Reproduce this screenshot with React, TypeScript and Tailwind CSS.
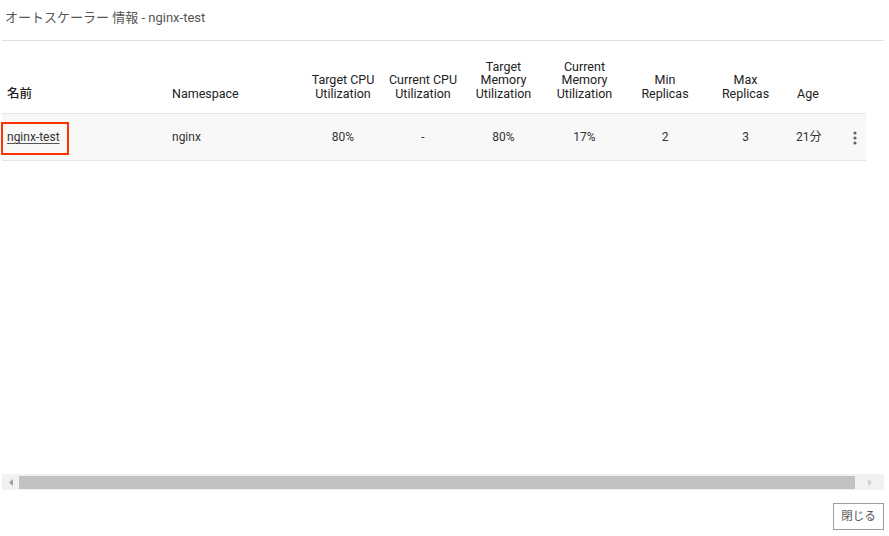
import React from "react";

const font = { fontFamily: "Roboto, 'Noto Sans CJK JP', sans-serif" };

function Kebab() {
  return (
    <svg width="4" height="14" viewBox="0 0 4 14">
      <circle cx="2" cy="2" r="1.6" fill="#5f6368" />
      <circle cx="2" cy="7" r="1.6" fill="#5f6368" />
      <circle cx="2" cy="12" r="1.6" fill="#5f6368" />
    </svg>
  );
}

export default function App() {
  const headers: { label: React.ReactNode; w: string; align: string }[] = [
    { label: <span className="font-medium">名前</span>, w: "w-[164px]", align: "text-left pl-[5px]" },
    { label: "Namespace", w: "w-[137px]", align: "text-left pl-[6px]" },
    { label: <>Target CPU<br />Utilization</>, w: "w-[80px]", align: "text-center" },
    { label: <>Current CPU<br />Utilization</>, w: "w-[80px]", align: "text-center" },
    { label: <>Target<br />Memory<br />Utilization</>, w: "w-[81px]", align: "text-center" },
    { label: <>Current<br />Memory<br />Utilization</>, w: "w-[81px]", align: "text-center" },
    { label: <>Min<br />Replicas</>, w: "w-[80px]", align: "text-center" },
    { label: <>Max<br />Replicas</>, w: "w-[81px]", align: "text-center" },
    { label: "Age", w: "w-[58px]", align: "text-left pl-[11px]" },
    { label: "", w: "w-[22px]", align: "" },
  ];
  const cells = ["80%", "-", "80%", "17%", "2", "3"];
  return (
    <div className="w-[889px] h-[536px] bg-white flex flex-col overflow-hidden" style={font}>
      <div className="h-[40px] flex items-center pl-[5px] pb-[4px] text-[13px] text-[#555]">
        オートスケーラー 情報 - nginx-test
      </div>
      <div className="mx-[2px] mr-[5px] h-px bg-[#e0e0e0]" />
      <div className="flex-1 pl-[2px]">
        <div className="flex h-[72px] items-end pb-[13px] text-[12.5px] leading-[13.5px] font-normal text-[#222]">
          {headers.map((h, i) => (
            <div key={i} className={`${h.w} ${h.align} shrink-0`}>
              {h.label}
            </div>
          ))}
        </div>
        <div className="flex w-[864px] h-[48px] items-center bg-[#f8f8f8] border-t border-b border-[#e6e6e6] text-[12px] text-[#333]">
          <div className="w-[164px] shrink-0 relative h-full flex items-center">
            <div className="absolute left-[-1px] top-[8px] w-[68px] h-[33px] border-2 border-[#ff3300]" />
            <span className="pl-[5px] underline underline-offset-2 decoration-[#555]">nginx-test</span>
          </div>
          <div className="w-[137px] shrink-0 pl-[6px]">nginx</div>
          <div className="w-[80px] shrink-0 text-center">{cells[0]}</div>
          <div className="w-[80px] shrink-0 text-center">{cells[1]}</div>
          <div className="w-[81px] shrink-0 text-center">{cells[2]}</div>
          <div className="w-[81px] shrink-0 text-center">{cells[3]}</div>
          <div className="w-[80px] shrink-0 text-center">{cells[4]}</div>
          <div className="w-[81px] shrink-0 text-center">{cells[5]}</div>
          <div className="w-[58px] shrink-0 pl-[10px]">21分</div>
          <div className="w-[22px] shrink-0 flex justify-center pt-[1px]">
            <Kebab />
          </div>
        </div>
      </div>
      <div className="mx-[2px] mr-[5px] h-[16px] bg-[#f1f1f1] flex items-center mb-[13px]">
        <div className="w-[17px] h-full flex items-center justify-center">
          <svg width="4" height="7" viewBox="0 0 4 7">
            <path d="M4 0 L0 3.5 L4 7 Z" fill="#a3a3a3" />
          </svg>
        </div>
        <div className="w-[836px] h-[13px] bg-[#c1c1c1]" />
        <div className="flex-1 h-full flex items-center justify-center">
          <svg width="4" height="7" viewBox="0 0 4 7">
            <path d="M0 0 L4 3.5 L0 7 Z" fill="#cfcfcf" />
          </svg>
        </div>
      </div>
      <div className="flex justify-end pr-[5px] pb-[6px]">
        <button className="w-[51px] h-[27px] border border-[#9e9e9e] text-[11.5px] text-[#555] bg-white">
          閉じる
        </button>
      </div>
    </div>
  );
}
